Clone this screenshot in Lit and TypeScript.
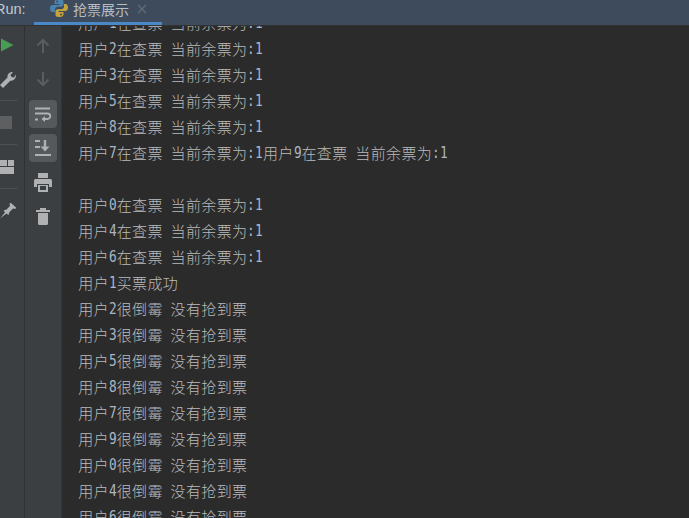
import { LitElement, html, css, svg } from "lit";
import { customElement } from "lit/decorators.js";

const LINES = [
  "用户1在查票 当前余票为:1",
  "用户2在查票 当前余票为:1",
  "用户3在查票 当前余票为:1",
  "用户5在查票 当前余票为:1",
  "用户8在查票 当前余票为:1",
  "用户7在查票 当前余票为:1用户9在查票 当前余票为:1",
  "",
  "用户0在查票 当前余票为:1",
  "用户4在查票 当前余票为:1",
  "用户6在查票 当前余票为:1",
  "用户1买票成功",
  "用户2很倒霉 没有抢到票",
  "用户3很倒霉 没有抢到票",
  "用户5很倒霉 没有抢到票",
  "用户8很倒霉 没有抢到票",
  "用户7很倒霉 没有抢到票",
  "用户9很倒霉 没有抢到票",
  "用户0很倒霉 没有抢到票",
  "用户4很倒霉 没有抢到票",
  "用户6很倒霉 没有抢到票",
];

const ic = (w: number, h: number, body: unknown) =>
  html`<svg width=${w} height=${h} viewBox="0 0 ${w} ${h}">${body}</svg>`;

@customElement("app-root")
export class AppRoot extends LitElement {
  static styles = css`
    :host { display: block; width: 689px; height: 518px; overflow: hidden; background: #2b2b2b; }
    .head { height: 25px; background: #3d4b5c; border-bottom: 1px solid #323232; display: flex; align-items: flex-start; }
    .run { width: 34px; flex: none; margin-left: -5px; font: 14.5px/18px "Liberation Sans", sans-serif; color: #c4c8cc; white-space: nowrap; }
    .tab { width: 128px; height: 25px; box-sizing: border-box; border-bottom: 3px solid #4a88c7; display: flex; align-items: flex-start; flex: none; margin-left: 5px; padding: 0 0 0 15px; }
    .py { flex: none; display: flex; margin-top: -4px; }
    .tab-t { margin-left: 4px; font: 14px/18px "Noto Sans CJK SC", sans-serif; color: #b9bdc1; white-space: nowrap; }
    .tab-x { margin-left: 8px; margin-top: 4px; flex: none; display: flex; }
    .body { display: flex; height: 492px; }
    .c1 { width: 24px; flex: none; background: #3c3f41; border-right: 1px solid #2f3133; display: flex; flex-direction: column; overflow: hidden; }
    .c2 { width: 36px; flex: none; background: #3c3f41; display: flex; flex-direction: column; align-items: center; border-right: 1px solid #333; }
    .slot { display: flex; align-items: center; flex: none; }
    .sep { height: 1px; background: #515151; flex: none; width: 17px; }
    .btn { width: 28px; height: 28px; border-radius: 4px; background: #55595c; display: flex; align-items: center; justify-content: center; flex: none; }
    .log { flex: 1; min-width: 0; overflow: hidden; background: #2b2b2b; padding-left: 16px; }
    .lines { margin-top: -16px; }
    .line { height: 26px; white-space: pre; color: #bbbbbb; display: flex; align-items: center; }
    .cjk { font: 15px/26px "Noto Sans CJK SC", sans-serif; font-weight: 300; width: 15.4px; text-align: center; flex: none; }
    .asc { font: 15.4px/26px "DejaVu Sans Mono", monospace; width: 9.27px; margin-right: -1.57px; flex: none; color: #a9b7c6; transform: scaleX(0.83); transform-origin: left center; }
  `;

  private renderLine(t: string) {
    return html`<div class="line">${[...t].map((c) =>
      /[\x00-\x7f]/.test(c)
        ? html`<span class="asc">${c}</span>`
        : html`<span class="cjk">${c}</span>`
    )}</div>`;
  }

  render() {
    return html`
      <div class="head">
        <div class="run">Run:</div>
        <div class="tab">
          <span class="py">${ic(20, 22, svg`
            <path d="M10 3c-4 0-4.500 1.600-4.500 3v2H10.500v1H3.500C2 9 1 10.500 1 12.500S2 16 3.500 16H6v-2.500c0-1.500 1.200-2.700 2.700-2.700h3.600c1.200 0 2.200-1 2.200-2.200V5.500C14.500 3.800 13 3 10 3z" fill="#4c83ae"/>
            <path d="M10 21c4 0 4.500-1.600 4.500-3v-2H9.500v-1h7c1.500 0 2.500-1.500 2.500-3.500S18 8 16.500 8H15v2.500c0 1.500-1.200 2.700-2.700 2.700H8.700c-1.200 0-2.200 1-2.200 2.200v3.100C6.500 20.200 7 21 10 21z" fill="#c4a53c"/>
            <circle cx="8" cy="5.500" r="1" fill="#3d4b5c"/>
            <circle cx="12" cy="18.500" r="1" fill="#3d4b5c"/>
          `)}</span>
          <span class="tab-t">抢票展示</span>
          <span class="tab-x">${ic(10, 10, svg`<path d="M1 1l8 8M9 1l-8 8" stroke="#5f6b78" stroke-width="1.400" fill="none"/>`)}</span>
        </div>
      </div>
      <div class="body">
        <div class="c1">
          <div class="slot" style="height:38px">
            ${ic(14, 14, svg`<path d="M1 0.500L13.500 7L1 13.500z" fill="#499c54"/>`)}
          </div>
          <div class="slot" style="height:30px">
            ${ic(16, 17, svg`<path d="M0 14l7.500-7.500C7 3.500 9.500 0.500 13 1l-2.500 3 1 2 2.500 0.500 1.800-3c0.700 3.500-2 7-5.500 6.200L3 17z" fill="#afb1b3"/>`)}
          </div>
          <div class="sep" style="margin-top:6px"></div>
          <div class="slot" style="height:43px">
            ${ic(12, 13, svg`<rect width="12" height="13" fill="#5d5f60"/>`)}
          </div>
          <div class="sep"></div>
          <div class="slot" style="height:43px">
            ${ic(14, 14, svg`<path d="M0 0h7v6H0zM8 0h6v6H8zM0 7h14v7H0z" fill="#afb1b3"/>`)}
          </div>
          <div class="sep"></div>
          <div class="slot" style="height:44px">
            ${ic(16, 16, svg`<path d="M0 15.500l5-6-1.500-2 3-1 3.500-3.500-.5-2.500 1.500-.5 5 4.500-.5 1.500-2.500-.5-3.500 3.500-1 3-2-1.500z" fill="#afb1b3"/>`)}
          </div>
        </div>
        <div class="c2">
          <div class="slot" style="height:38px">
            ${ic(14, 15, svg`<path d="M7 2v13M1.500 7.500L7 2l5.500 5.500" stroke="#5a5d5f" stroke-width="2" fill="none"/>`)}
          </div>
          <div class="slot" style="height:30px">
            ${ic(14, 15, svg`<path d="M7 0v13M1.500 7.500L7 13l5.500-5.500" stroke="#5a5d5f" stroke-width="2" fill="none"/>`)}
          </div>
          <div class="btn" style="margin-top:6px">
            ${ic(18, 15, svg`<path d="M1 1.500h15M1 6.500h12.500a2.700 2.700 0 0 1 0 5.500H9M1 12.500h3" stroke="#afb1b3" stroke-width="1.800" fill="none"/><path d="M11 9l-3.500 3 3.500 3z" fill="#afb1b3"/>`)}
          </div>
          <div class="btn" style="margin-top:6px">
            ${ic(18, 16, svg`<path d="M1 1h5M1 7h5M1 15h16" stroke="#afb1b3" stroke-width="1.800" fill="none"/><path d="M11 0v8" stroke="#afb1b3" stroke-width="2.400"/><path d="M6.500 6.500h9L11 11.500z" fill="#afb1b3"/>`)}
          </div>
          <div class="slot" style="height:39px;padding-top:1px">
            ${ic(18, 19, svg`<path d="M4 0h10v5H4zM1.500 6h15q1.500 0 1.500 1.500V14h-3v-3H3v3H0V7.500Q0 6 1.500 6zM4 12h10v7H4z" fill="#afb1b3"/><rect x="6" y="13" width="6" height="4" fill="#3c3f41"/>`)}
          </div>
          <div class="slot" style="height:28px">
            ${ic(14, 17, svg`<path d="M0 2h14v2H0zM4 0h6v2H4zM2 5h10v10.500q0 1.500-1.500 1.500h-7Q2 17 2 15.500z" fill="#afb1b3"/>`)}
          </div>
        </div>
        <div class="log"><div class="lines">${LINES.map((l) => this.renderLine(l))}</div></div>
      </div>
    `;
  }
}
